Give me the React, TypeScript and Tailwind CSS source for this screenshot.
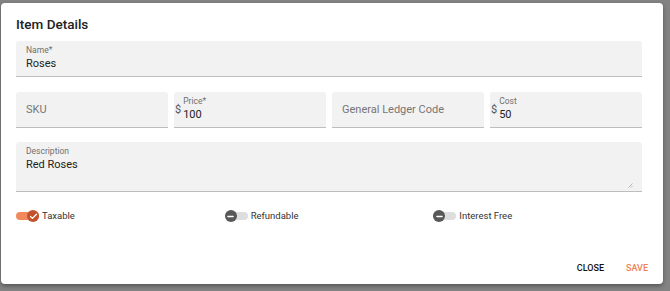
import { Check, Minus } from "lucide-react";

type FieldProps = {
  label?: string;
  value?: string;
  placeholder?: string;
  prefix?: string;
};

function Field({ label, value, placeholder, prefix }: FieldProps) {
  return (
    <div className="flex h-[36px] rounded-t-[3px] border-b border-[#bdbdbd] bg-[#f2f2f2]">
      {prefix && (
        <span className="self-center pl-[1px] text-[11px] leading-[14px] text-[#555]">{prefix}</span>
      )}
      {placeholder ? (
        <span className="self-center pl-[10px] text-[11px] leading-[14px] text-[#767676]">{placeholder}</span>
      ) : (
        <div className={`flex flex-col pt-[3px] ${prefix ? "pl-[2px]" : "pl-[10px]"}`}>
          <span className="text-[8.5px] leading-[13px] text-[#707070]">{label}</span>
          <span className="text-[11px] leading-[14px] text-[#222]">{value}</span>
        </div>
      )}
    </div>
  );
}

function Toggle({ label, on }: { label: string; on?: boolean }) {
  return (
    <div className="flex items-center gap-[3px]">
      <div className="relative h-[14px] w-[23px]">
        <div
          className={`absolute left-0 right-0 top-[3px] h-[8px] rounded-full ${on ? "bg-[#f2895c]" : "bg-[#dedede]"}`}
        />
        {on ? (
          <div className="absolute right-0 top-[1px] flex h-[12px] w-[12px] items-center justify-center rounded-full bg-[#c2522a]">
            <Check size={9} strokeWidth={3.5} color="#fff" />
          </div>
        ) : (
          <div className="absolute left-0 top-[1px] flex h-[12px] w-[12px] items-center justify-center rounded-full bg-[#585858]">
            <Minus size={9} strokeWidth={3.5} color="#fff" />
          </div>
        )}
      </div>
      <span className="text-[9.5px] leading-[14px] text-[#333]">{label}</span>
    </div>
  );
}

export default function App() {
  return (
    <div
      className="h-[291px] w-[670px] overflow-hidden bg-[#838383] pl-[1px] pt-[3px]"
      style={{ fontFamily: "Roboto, 'Liberation Sans', sans-serif" }}
    >
      <div className="flex h-[281px] w-[662px] flex-col rounded-[4px] bg-white pl-[15px] pr-[21px] shadow-[0_2px_4px_rgba(0,0,0,0.35)]">
        <h2 className="mb-[7px] pt-[11px] text-[13.5px] font-medium leading-[20px] text-[#222]">Item Details</h2>

        <Field label="Name*" value="Roses" />

        <div className="mt-[15px] grid grid-cols-4 gap-[6px]">
          <Field placeholder="SKU" />
          <Field prefix="$" label="Price*" value="100" />
          <Field placeholder="General Ledger Code" />
          <Field prefix="$" label="Cost" value="50" />
        </div>

        <div className="relative mt-[14px] flex h-[50px] flex-col rounded-t-[3px] border-b border-[#bdbdbd] bg-[#f2f2f2] pl-[10px] pt-[3px]">
          <span className="text-[8.5px] leading-[13px] text-[#707070]">Description</span>
          <span className="text-[11px] leading-[14px] text-[#222]">Red Roses</span>
          <svg className="absolute bottom-[3px] right-[9px]" width="6" height="6" viewBox="0 0 6 6">
            <path d="M5.5 1.5 L1.5 5.5 M5.5 4 L4 5.5" stroke="#aaa" strokeWidth="0.8" />
          </svg>
        </div>

        <div className="mt-[17px] grid grid-cols-3">
          <Toggle label="Taxable" on />
          <Toggle label="Refundable" />
          <Toggle label="Interest Free" />
        </div>

        <div className="mr-[-6px] mt-[39px] flex justify-end gap-[22px]">
          <button className="text-[9px] font-medium leading-[12px] text-[#111]">CLOSE</button>
          <button className="text-[9px] font-medium leading-[12px] text-[#f0804f]">SAVE</button>
        </div>
      </div>
    </div>
  );
}
